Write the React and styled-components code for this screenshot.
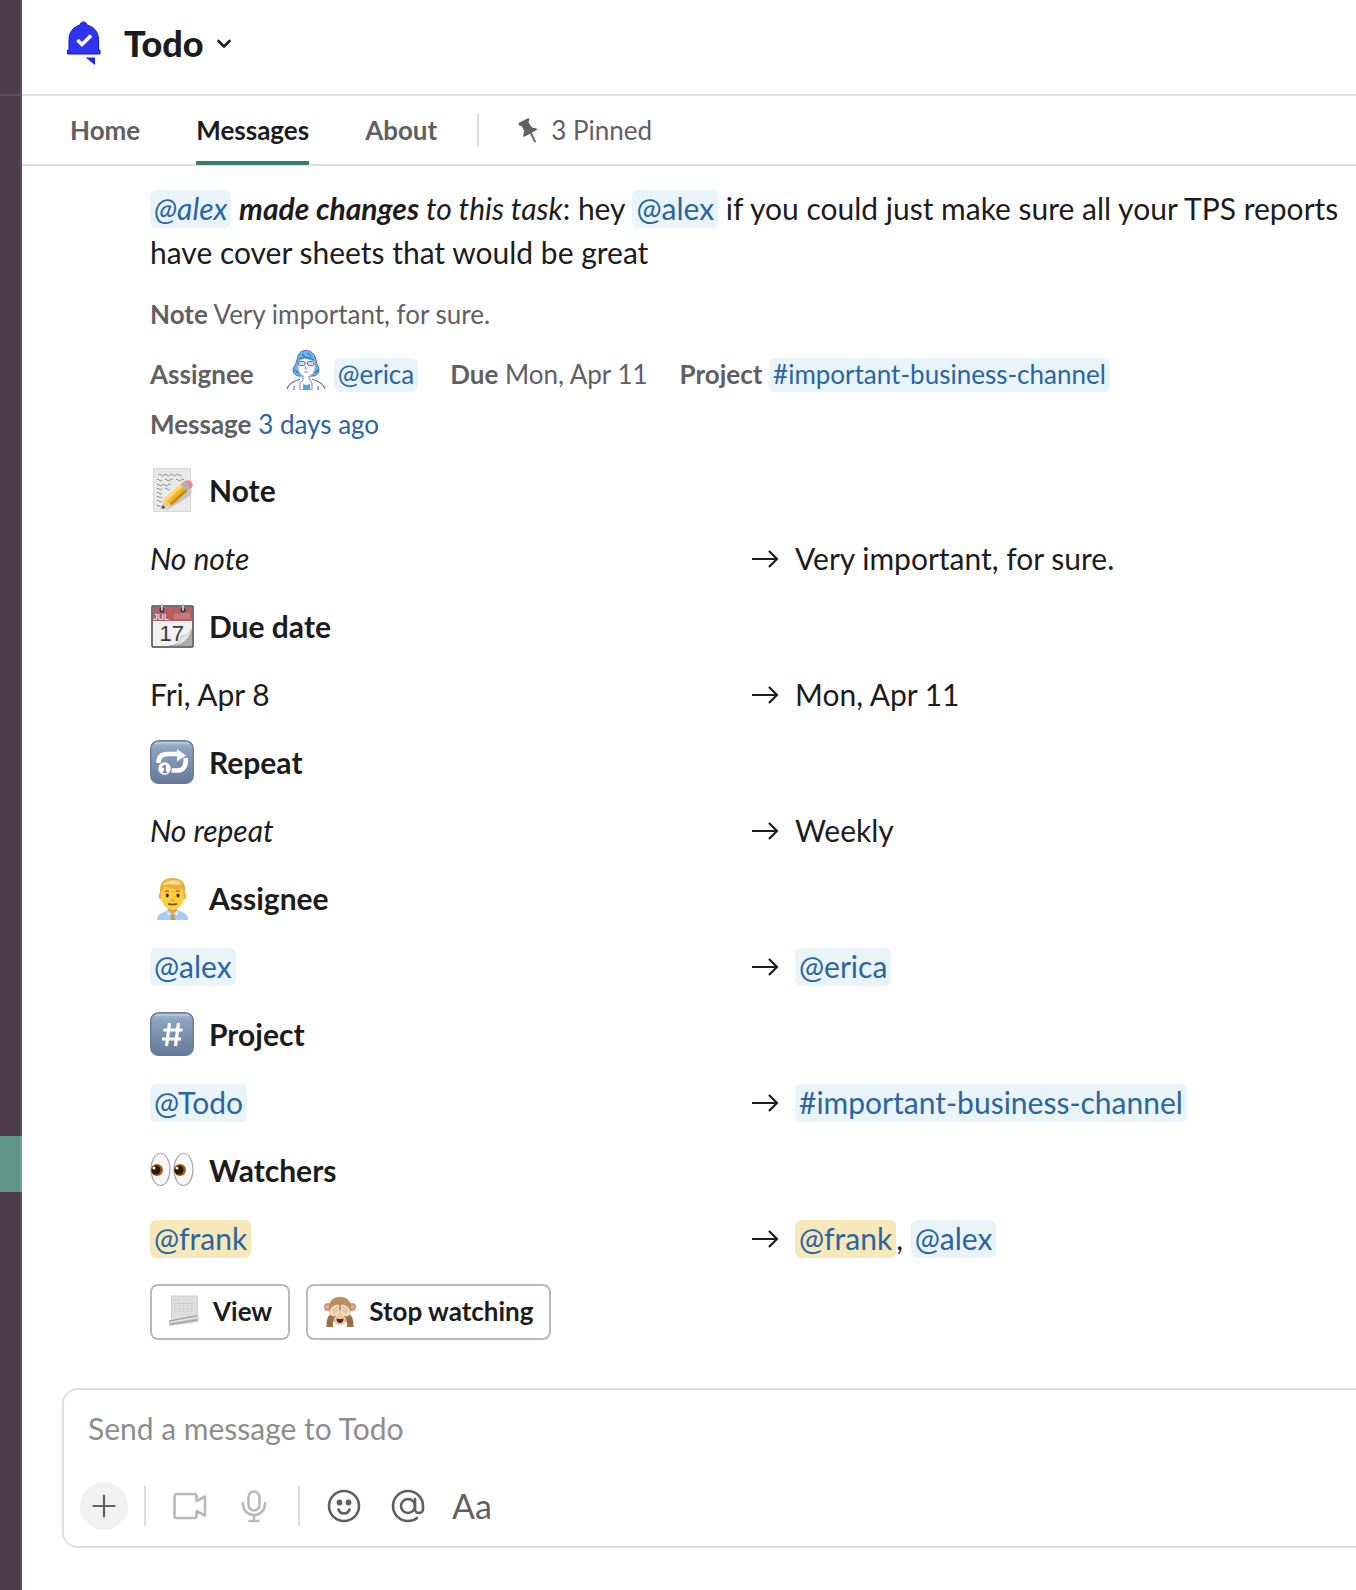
import React from 'react';
import styled, { createGlobalStyle, css } from 'styled-components';

const GlobalStyle = createGlobalStyle`
    * {
        box-sizing: border-box;
    }
    body {
        margin: 0;
        background: #fff;
        color: #1d1c1d;
        font-family: Lato, 'Liberation Sans', sans-serif;
        font-size: 30px;
        line-height: 44px;
    }
    button, input {
        font-family: inherit;
        color: inherit;
    }
    svg {
        display: block;
        flex-shrink: 0;
    }
`;

const Page = styled.div`
    display: flex;
    min-height: 100vh;
    overflow: hidden;
`;

const Sidebar = styled.div`
    flex: 0 0 22px;
    background: #4d3b4c;
    border-right: 2px solid #5e4d5e;
`;

const SidebarHeader = styled.div`
    height: 96px;
    border-bottom: 2px solid #5e4d5e;
    margin-bottom: 32px;
`;

const SidebarItem = styled.div`
    height: 56px;
    margin-right: -2px;
    ${({ $selected }) => $selected && css`
        background: #5f9587;
        border-right: 2px solid #6fa094;
    `}
`;

const Main = styled.main`
    flex: 1;
    min-width: 0;
    display: flex;
    flex-direction: column;
`;

const Header = styled.header`
    height: 96px;
    padding: 0 40px 8px;
    border-bottom: 2px solid #dfdfdf;
    display: flex;
    align-items: center;
    gap: 18px;
`;

const TitleButton = styled.button`
    display: flex;
    align-items: center;
    gap: 8px;
    padding: 0;
    border: 0;
    background: none;
    font-size: 36px;
    font-weight: 900;
    line-height: 44px;
`;

const Tabs = styled.nav`
    display: flex;
    align-items: center;
    height: 70px;
    padding: 0 48px;
    gap: 56px;
    border-bottom: 2px solid #dfdfdf;
    font-size: 26px;
    font-weight: 700;
`;

const Tab = styled.a`
    height: 70px;
    padding-top: 4px;
    line-height: 66px;
    text-decoration: none;
    color: ${({ $active }) => $active ? '#1d1c1d' : '#616061'};
    border-bottom: 4px solid ${({ $active }) => $active ? '#37805f' : 'transparent'};
    font-weight: ${({ $light }) => $light ? 400 : 700};
    display: flex;
    align-items: center;
    gap: 12px;
`;

const Pins = styled.div`
    display: flex;
    align-items: center;
    gap: 38px;
    margin-left: -16px;
`;

const Divider = styled.span`
    width: 2px;
    height: ${({ $height }) => $height}px;
    background: #dddddd;
`;

const Message = styled.article`
    padding: 20px 6px 48px 128px;
`;

const Text = styled.p`
    margin: 0;
`;

const BoldItalic = styled.em`
    font-weight: 700;
`;

const Mention = styled.a`
    padding: 0 4px 2px;
    border-radius: 6px;
    color: #2b64a3;
    text-decoration: none;
    font-style: ${({ $italic }) => $italic ? 'italic' : 'normal'};
    background: ${({ $me }) => $me ? '#f6e8b9' : '#e9f4f8'};
`;

const Context = styled.div`
    display: flex;
    flex-wrap: wrap;
    align-items: flex-end;
    gap: 10px 32px;
    margin-top: ${({ $gap }) => $gap}px;
    font-size: 26px;
    line-height: 40px;
    color: #616061;
`;

const Assignee = styled.span`
    display: flex;
    align-items: flex-end;
    gap: 8px;
    height: 44px;
    svg {
        align-self: flex-start;
    }
`;

const TextLink = styled.a`
    color: #2b64a3;
    text-decoration: none;
`;

const Changes = styled.div`
    display: flex;
    flex-direction: column;
    gap: 24px;
    margin: 24px 0;
`;

const Heading = styled.h3`
    display: flex;
    align-items: center;
    gap: 15px;
    margin: 0;
    font-size: 30px;
    font-weight: 700;
`;

const ChangeRow = styled.div`
    display: grid;
    grid-template-columns: 1fr 1fr;
`;

const NewValue = styled.div`
    display: flex;
    align-items: center;
    gap: 15px;
`;

const Actions = styled.div`
    display: flex;
    gap: 16px;
`;

const ActionButton = styled.button`
    display: flex;
    align-items: center;
    gap: 13px;
    height: 56px;
    padding: 0 16px 2px;
    border: 2px solid #bbbabb;
    border-radius: 8px;
    background: #fff;
    font-size: 26px;
    font-weight: 700;
`;

const Composer = styled.form`
    height: 160px;
    margin: 0 0 42px 40px;
    padding: 16px;
    border: 2px solid #dfdfdf;
    border-right: 0;
    border-radius: 16px 0 0 16px;
    display: flex;
    flex-direction: column;
    justify-content: space-between;
`;

const MessageInput = styled.input`
    width: 100%;
    height: 44px;
    padding: 0 8px;
    border: 0;
    outline: 0;
    background: none;
    font-size: 30px;
    &::placeholder {
        color: #8d8d8d;
        opacity: 1;
    }
`;

const Toolbar = styled.div`
    display: flex;
    align-items: center;
    gap: 16px;
    height: 48px;
`;

const ToolButton = styled.button`
    display: flex;
    align-items: center;
    justify-content: center;
    width: 48px;
    height: 48px;
    padding: 0;
    border: 0;
    border-radius: 50%;
    background: ${({ $filled }) => $filled ? '#f1f1f1' : 'none'};
    color: ${({ $disabled }) => $disabled ? '#bbbabb' : '#616061'};
    font-size: 34px;
    line-height: 44px;
`;

const ToolGroup = styled.div`
    display: flex;
    gap: 16px;
    padding: 0 4px;
`;

const BellLogo = () => (
    <svg width="44" height="46" viewBox="0 0 44 46" aria-hidden="true">
        <path
            d="M21.500 2c2 0 3 1.200 3.500 3 7.500 2 11.500 7.500 11.500 14.500V30H38v4H5.500v-4H7V19.500C7 12.500 11 7 18 5c.5-1.800 1.500-3 3.500-3z"
            fill="#2f35ee" stroke="#1414ee"
        />
        <path d="M23.500 37.500H33v7.500z" fill="#2323ee" />
        <path d="M15.500 20l4.500 4.500 9-9" fill="none" stroke="#fff" strokeWidth="3.600" />
    </svg>
);

const Chevron = () => (
    <svg width="24" height="24" viewBox="0 0 24 24" aria-hidden="true">
        <path d="M6.500 10l5.500 5.500L17.500 10" fill="none" stroke="#1d1c1d" strokeWidth="2.600" strokeLinecap="round" strokeLinejoin="round" />
    </svg>
);

const Pin = () => (
    <svg width="22" height="26" viewBox="0 0 22 26" aria-hidden="true">
        <path d="M2.500 5.500L10.500 1.500c1.500-.5 2.300.5 1.800 1.500l-.8 2.500 3.500 5 4 .8c1.200.4 1.300 1.500.2 2L8 19.500c-1.200.6-2.200 0-1.800-1.200l1-4.300-2.200-4.500-2.700-1c-1.300-.8-1-2.300.2-3z" fill="#616061" />
        <path d="M14 16.500l4 8" stroke="#616061" strokeWidth="1.800" strokeLinecap="round" />
    </svg>
);

const EricaAvatar = () => (
    <svg width="40" height="40" viewBox="0 0 40 40" aria-hidden="true">
        <path d="M11 10C12 3 15 .5 20 .5S29 4 30 10c.5 4 3 7 3 10s-2 5-5 6H12c-3-1-5-3-5-6 0-3 3.500-6 4-10z" fill="#62b9ee" stroke="#5565ad" />
        <path d="M12 11c4-1 5-3 6-3s7 2 11 3v8c-1 4-4 8-8.500 8S13 23 12 19z" fill="#fff" stroke="#8b8fc4" strokeWidth=".8" />
        <path d="M13 9c4-2 10-2 15 1M16 4l3 3M22 3l3 4" fill="none" stroke="#347bb8" strokeWidth="1.200" />
        <rect x="12.500" y="11.500" width="6.500" height="4" rx="1.500" fill="#cddff0" stroke="#69709f" />
        <rect x="21.500" y="11.500" width="6.500" height="4" rx="1.500" fill="#cddff0" stroke="#69709f" />
        <path d="M19 13h2.500M20 16l-1 3h2M18 22h4" fill="none" stroke="#787eae" strokeWidth=".9" />
        <path d="M17 26v4l-3 3v7h12v-7l-3-4v-3" fill="#fff" stroke="#777eb2" />
        <path d="M17 34l3.500 1 3.500-1v6h-7z" fill="#4aabe4" />
        <path d="M1 39c1-4 4-7 13-10M39 39c-1-4-4-7-13-10M8 36v4M32 36v4" fill="none" stroke="#6f70aa" strokeWidth="1.200" />
        <path d="M9 20l3 3M29 23l3-3" stroke="#347bb8" strokeWidth="1.500" />
    </svg>
);

const NoteEmoji = () => (
    <svg width="44" height="44" viewBox="0 0 44 44" aria-hidden="true">
        <rect x="3.500" y=".5" width="37" height="43" fill="#e9e9e9" stroke="#d8d8d8" />
        <path d="M8 7q2-2 3 0t3 0 3 0 3 0 3 0 3 0 3 0 3 0M7 12q1-2 2 0t3 0M15 12q1-2 2 0t3 0 3 0M26 12q1-2 2 0t3 0 3 0M7 17q1-2 2 0t3 0 3 0 3 0 3 0M7 21q1-2 2 0t3 0M15 21q1-2 2 0t3 0M7 25q1-2 2 0t3 0M7 29q1-2 2 0t3 0M7 33q1-2 2 0t3 0M7 38q1-2 2 0t3 0" fill="none" stroke="#777" strokeWidth=".8" />
        <path d="M15 42L38 24l4-3-1 6-24 15z" fill="#c4c4c4" />
        <path d="M11.500 40.500l3-10 7 7z" fill="#ecc895" />
        <path d="M11.500 41l1.300-4 2.700 3z" fill="#444" />
        <path d="M14.500 30.500L31 16l6.500 7.500-16 14z" fill="#efb429" />
        <path d="M14.500 30.500L31 16l2 2.300L16.500 33z" fill="#ffd865" />
        <path d="M19.500 35.500L35.500 21l2 2.500-16 14z" fill="#c98a17" />
        <path d="M31 16l3-2.500 6.500 7.500-3 2.500z" fill="#9eb5c3" />
        <path d="M34 13.500c2.500-2 5.500-1.500 7.500.5s1.500 5-1 7z" fill="#ef8589" />
    </svg>
);

const CalendarEmoji = () => (
    <svg width="44" height="44" viewBox="0 0 44 44" aria-hidden="true">
        <rect x="2" y="2" width="41" height="41" rx="1" fill="#f1f1f1" stroke="#444" strokeWidth="1.500" />
        <path d="M3 3h39v14H3z" fill="#b75f60" />
        <path d="M25 15V10M27 15V9M29 15V10M31 15V9M33 15v-6M35 15V9M37 15V9M39 15V9" stroke="#cf9292" />
        <path d="M42 26v16H19c9-1 12-4 13-9 5 1 8-2 10-7z" fill="#aaa" />
        <path d="M42 25c-3 5-6 7-11 7 1 5-4 9-12 10 12 0 20-5 23-17z" fill="#e7e7e7" stroke="#999" strokeWidth=".6" />
        <text x="3.500" y="16" fontFamily="Liberation Sans" fontWeight="400" fontSize="8.500" fill="#fff">JUL</text>
        <text x="9.500" y="37" fontFamily="Liberation Sans" fontWeight="400" fontSize="22" fill="#3b3b3b">17</text>
        <circle cx="12" cy="6" r="2.500" fill="#333" />
        <circle cx="33" cy="6" r="2.500" fill="#333" />
        <path d="M12 1v5M33 1v5" stroke="#a9c6d4" strokeWidth="2" strokeLinecap="round" />
    </svg>
);

const KeycapBase = ({ id, children }) => (
    <svg width="44" height="44" viewBox="0 0 44 44" aria-hidden="true">
        <defs>
            <linearGradient id={id} x2="0" y2="1">
                <stop stopColor="#a9bbd0" />
                <stop offset=".2" stopColor="#89a1bf" />
                <stop offset="1" stopColor="#647a97" />
            </linearGradient>
        </defs>
        <rect x=".7" y=".7" width="42.600" height="42.600" rx="8" fill={`url(#${id})`} stroke="#667b96" strokeWidth="1.400" />
        <path d="M6 3h32" stroke="#cbd6e2" strokeLinecap="round" />
        {children}
    </svg>
);

const RepeatEmoji = () => (
    <KeycapBase id="repeatCap">
        <path d="M8.500 23c0-6 3-9 9-9h10" fill="none" stroke="#fff" strokeWidth="4.600" />
        <path d="M27 9l9 6.500-9 6z" fill="#fff" />
        <path d="M35.500 18c1 8-2 12.500-8 12.500h-6" fill="none" stroke="#fff" strokeWidth="4.600" />
        <circle cx="14.500" cy="28.500" r="7.200" fill="#7b92b0" />
        <circle cx="14.500" cy="28.500" r="6.200" fill="#fff" />
        <text x="14.500" y="32.500" textAnchor="middle" fontFamily="Lato" fontSize="11" fontWeight="900" fill="#5e7797">1</text>
    </KeycapBase>
);

const HashEmoji = () => (
    <KeycapBase id="hashCap">
        <path d="M19.500 11l-3 23M28.500 11l-3 23M13.500 18H32.500M12 27H31" fill="none" stroke="#fff" strokeWidth="3.200" />
    </KeycapBase>
);

const ManEmoji = () => (
    <svg width="44" height="44" viewBox="0 0 44 44" aria-hidden="true">
        <path d="M7 44c0-6 5-8 12-9h8c7 1 11 3 11 9z" fill="#a9cdf0" />
        <path d="M18 31h9v6l-4.500 3-4.500-3z" fill="#e2a628" />
        <path d="M15 36l3-2 4.500 4 4.500-4 3 2-3 5-4.500-3-4.500 3z" fill="#cfe4f8" stroke="#86afd7" strokeWidth=".7" />
        <path d="M21.500 38h2.500l1.500 6h-5z" fill="#c6a14b" />
        <ellipse cx="10.500" cy="20" rx="1.800" ry="3" fill="#efb72e" />
        <ellipse cx="34.500" cy="20" rx="1.800" ry="3" fill="#efb72e" />
        <path d="M11 15c0-6 5-10 11.500-10S34 9 34 15v5c0 8-6 14-11.500 14S11 28 11 20z" fill="#ffce3e" />
        <path d="M10.500 19C8 8 13 2 22.500 2S37 7 34.500 19L32.500 13c-7 1-13 0-17-2.500-2 2-4 4-5 8.500z" fill="#e8b03d" />
        <path d="M13 9c4-6 15-6 19-1-6 2-12-1-19 1z" fill="#fae08a" />
        <path d="M15 15.500q2-1.500 4 0M26 15.500q2-1.500 4 0" fill="none" stroke="#8a5a13" strokeWidth="1.200" />
        <ellipse cx="17.300" cy="19.500" rx="1.500" ry="2" fill="#40270f" />
        <ellipse cx="28" cy="19.500" rx="1.500" ry="2" fill="#40270f" />
        <path d="M21 24q1.700 1 3.400 0" fill="none" stroke="#c98317" />
        <path d="M18.500 28q4 1 8 0" fill="none" stroke="#774117" strokeWidth="1.400" strokeLinecap="round" />
    </svg>
);

const EyesEmoji = () => (
    <svg width="44" height="44" viewBox="0 0 44 44" aria-hidden="true">
        {[1, 24].map((x) => (
            <g key={x}>
                <ellipse cx={x + 9.5} cy="21.500" rx="9.500" ry="16" fill="#f8f8f8" stroke="#aaa" strokeWidth="1.200" />
                <circle cx={x + 6} cy="22" r="6" fill="#94601b" />
                <circle cx={x + 5} cy="22" r="4.500" fill="#321706" />
                <circle cx={x + 3} cy="20" r="1.500" fill="#fff" />
            </g>
        ))}
    </svg>
);

const ScrollEmoji = () => (
    <svg width="32" height="32" viewBox="0 0 32 32" aria-hidden="true">
        <path d="M3.500 1h26v22l-26 4z" fill="#dedede" stroke="#cfcfcf" />
        <path d="M6 5h5M6 8.500h20M6 11h20M6 13.500h20M6 16h20" stroke="#c4c4c4" strokeWidth=".8" strokeDasharray="3 1" />
        <path d="M1 26l28-5.500c2 1 2 5 .5 6.500L2 31c-1-1-1.500-3-1-5z" fill="#c6c6c6" />
        <path d="M1 26l28-5.500M2 29l27-4" stroke="#9e9e9e" />
        <path d="M2 27.500l27-5" stroke="#eee" strokeWidth="1.200" />
    </svg>
);

const MonkeyEmoji = () => (
    <svg width="32" height="32" viewBox="0 0 32 32" aria-hidden="true">
        <circle cx="4" cy="12" r="4" fill="#c79b69" />
        <circle cx="28" cy="12" r="4" fill="#c79b69" />
        <circle cx="3.500" cy="12" r="2.300" fill="#f1a1a6" />
        <circle cx="28.500" cy="12" r="2.300" fill="#f1a1a6" />
        <path d="M5 13C5 5 10 2 16 2s11 3 11 11-4 16-11 16S5 21 5 13z" fill="#b7905e" />
        <path d="M10 19c0-3 3-4 6-4s6 1 6 4v5c0 4-3 6-6 6s-6-2-6-6z" fill="#e7c79e" />
        <path d="M12.500 23.500q3.500 1 7 0c0 3-1.500 4.500-3.500 4.500s-3.500-1.500-3.500-4.500z" fill="#5c1f20" />
        <path d="M2.500 32c0-6 .5-10 4-13l5.500 2c-3 3-3 6-3 11zM29.500 32c0-6-.5-10-4-13L20 21c3 3 3 6 3 11z" fill="#9b7045" />
        <path d="M6 20c-1-3 0-7 4-9.500l3.500-1c1.500 0 2 1 1.500 2.500v7c-3 3-6 3-9 1zM26 20c1-3 0-7-4-9.500l-3.500-1c-1.500 0-2 1-1.500 2.500v7c3 3 6 3 9 1z" fill="#f2d6b9" />
        <path d="M8.500 16l5-4.500M10 18l4.500-4M23.500 16l-5-4.500M22 18l-4.500-4" stroke="#c49a74" strokeWidth=".8" />
    </svg>
);

const ArrowIcon = () => (
    <svg width="30" height="24" viewBox="0 0 30 24" role="img" aria-label="changed to">
        <path d="M2 13h25M19 5l8 8-8 8" fill="none" stroke="#1d1c1d" strokeWidth="2.200" />
    </svg>
);

const ToolIcon = ({ children }) => (
    <svg width="36" height="36" viewBox="0 0 36 36" fill="none" stroke="currentColor" strokeWidth="2.600" strokeLinecap="round" strokeLinejoin="round" aria-hidden="true">
        {children}
    </svg>
);

const PlusIcon = () => (
    <ToolIcon>
        <path d="M18 7.500v21M7.500 18h21" strokeWidth="2.200" />
    </ToolIcon>
);

const VideoIcon = () => (
    <ToolIcon>
        <path d="M4.500 6h18a2 2 0 0 1 2 2v5l8.500-4.500v19L24.500 23v5a2 2 0 0 1-2 2h-18a2 2 0 0 1-2-2V8a2 2 0 0 1 2-2z" />
    </ToolIcon>
);

const MicIcon = () => (
    <ToolIcon>
        <rect x="12.500" y="3.500" width="11" height="19" rx="5.500" />
        <path d="M7 15v1c0 6 4.500 11 11 11s11-5 11-11v-1M18 27v6M13.500 33h9" />
    </ToolIcon>
);

const SmileIcon = () => (
    <ToolIcon>
        <circle cx="18" cy="18" r="15" />
        <circle cx="13.500" cy="14.500" r="1.600" fill="currentColor" />
        <circle cx="22.500" cy="14.500" r="1.600" fill="currentColor" />
        <path d="M12.500 21.500c1 3 3 4 5.500 4s4.500-1 5.500-4" />
    </ToolIcon>
);

const MentionIcon = () => (
    <ToolIcon>
        <circle cx="18" cy="18" r="7" />
        <path d="M25 11v10a4 4 0 0 0 8 0v-3A15 15 0 1 0 18 33c3.500 0 6.500-1 9-3" />
    </ToolIcon>
);

const changes = [
    { title: 'Note', Icon: NoteEmoji, before: <em>No note</em>, after: 'Very important, for sure.' },
    { title: 'Due date', Icon: CalendarEmoji, before: 'Fri, Apr 8', after: 'Mon, Apr 11' },
    { title: 'Repeat', Icon: RepeatEmoji, before: <em>No repeat</em>, after: 'Weekly' },
    {
        title: 'Assignee',
        Icon: ManEmoji,
        before: <Mention href="#alex">@alex</Mention>,
        after: <Mention href="#erica">@erica</Mention>,
    },
    {
        title: 'Project',
        Icon: HashEmoji,
        before: <Mention href="#todo">@Todo</Mention>,
        after: <Mention href="#channel">#important-business-channel</Mention>,
    },
    {
        title: 'Watchers',
        Icon: EyesEmoji,
        before: <Mention href="#frank" $me>@frank</Mention>,
        after: <><Mention href="#frank" $me>@frank</Mention>, <Mention href="#alex">@alex</Mention></>,
    },
];

const SELECTED_CHANNEL = 18;

const App = () => (
    <>
        <GlobalStyle />
        <Page>
            <Sidebar>
                <SidebarHeader />
                {Array.from({ length: SELECTED_CHANNEL + 1 }, (_, i) => (
                    <SidebarItem key={i} $selected={i === SELECTED_CHANNEL} />
                ))}
            </Sidebar>
            <Main>
                <Header>
                    <BellLogo />
                    <TitleButton type="button">Todo <Chevron /></TitleButton>
                </Header>
                <Tabs>
                    <Tab href="#home">Home</Tab>
                    <Tab href="#messages" $active>Messages</Tab>
                    <Tab href="#about">About</Tab>
                    <Pins>
                        <Divider $height={32} />
                        <Tab href="#pinned" $light><Pin />3 Pinned</Tab>
                    </Pins>
                </Tabs>
                <Message>
                    <Text>
                        <Mention href="#alex" $italic>@alex</Mention>{' '}
                        <BoldItalic>made changes</BoldItalic>
                        <em> to this task</em>
                        <span>: hey </span>
                        <Mention href="#alex">@alex</Mention>
                        <span> if you could just make sure all your TPS reports have cover sheets that would be great</span>
                    </Text>
                    <Context $gap={20}>
                        <span><b>Note</b> Very important, for sure.</span>
                    </Context>
                    <Context $gap={16}>
                        <b>Assignee</b>
                        <Assignee>
                            <EricaAvatar />
                            <span><Mention href="#erica">@erica</Mention></span>
                        </Assignee>
                        <span><b>Due</b> Mon, Apr 11</span>
                        <span><b>Project</b> <Mention href="#channel">#important-business-channel</Mention></span>
                        <span><b>Message</b> <TextLink href="#message">3 days ago</TextLink></span>
                    </Context>
                    <Changes>
                        {changes.map(({ title, Icon, before, after }) => (
                            <React.Fragment key={title}>
                                <Heading><Icon />{title}</Heading>
                                <ChangeRow>
                                    <div>{before}</div>
                                    <NewValue><ArrowIcon /><span>{after}</span></NewValue>
                                </ChangeRow>
                            </React.Fragment>
                        ))}
                    </Changes>
                    <Actions>
                        <ActionButton type="button"><ScrollEmoji />View</ActionButton>
                        <ActionButton type="button"><MonkeyEmoji />Stop watching</ActionButton>
                    </Actions>
                </Message>
                <Composer>
                    <MessageInput type="text" placeholder="Send a message to Todo" aria-label="Send a message to Todo" />
                    <Toolbar>
                        <ToolButton type="button" aria-label="Attach" $filled><PlusIcon /></ToolButton>
                        <Divider $height={40} />
                        <ToolGroup>
                            <ToolButton type="button" aria-label="Record video" $disabled><VideoIcon /></ToolButton>
                            <ToolButton type="button" aria-label="Record audio" $disabled><MicIcon /></ToolButton>
                        </ToolGroup>
                        <Divider $height={40} />
                        <ToolGroup>
                            <ToolButton type="button" aria-label="Emoji"><SmileIcon /></ToolButton>
                            <ToolButton type="button" aria-label="Mention someone"><MentionIcon /></ToolButton>
                            <ToolButton type="button" aria-label="Formatting">Aa</ToolButton>
                        </ToolGroup>
                    </Toolbar>
                </Composer>
            </Main>
        </Page>
    </>
);

export default App;
